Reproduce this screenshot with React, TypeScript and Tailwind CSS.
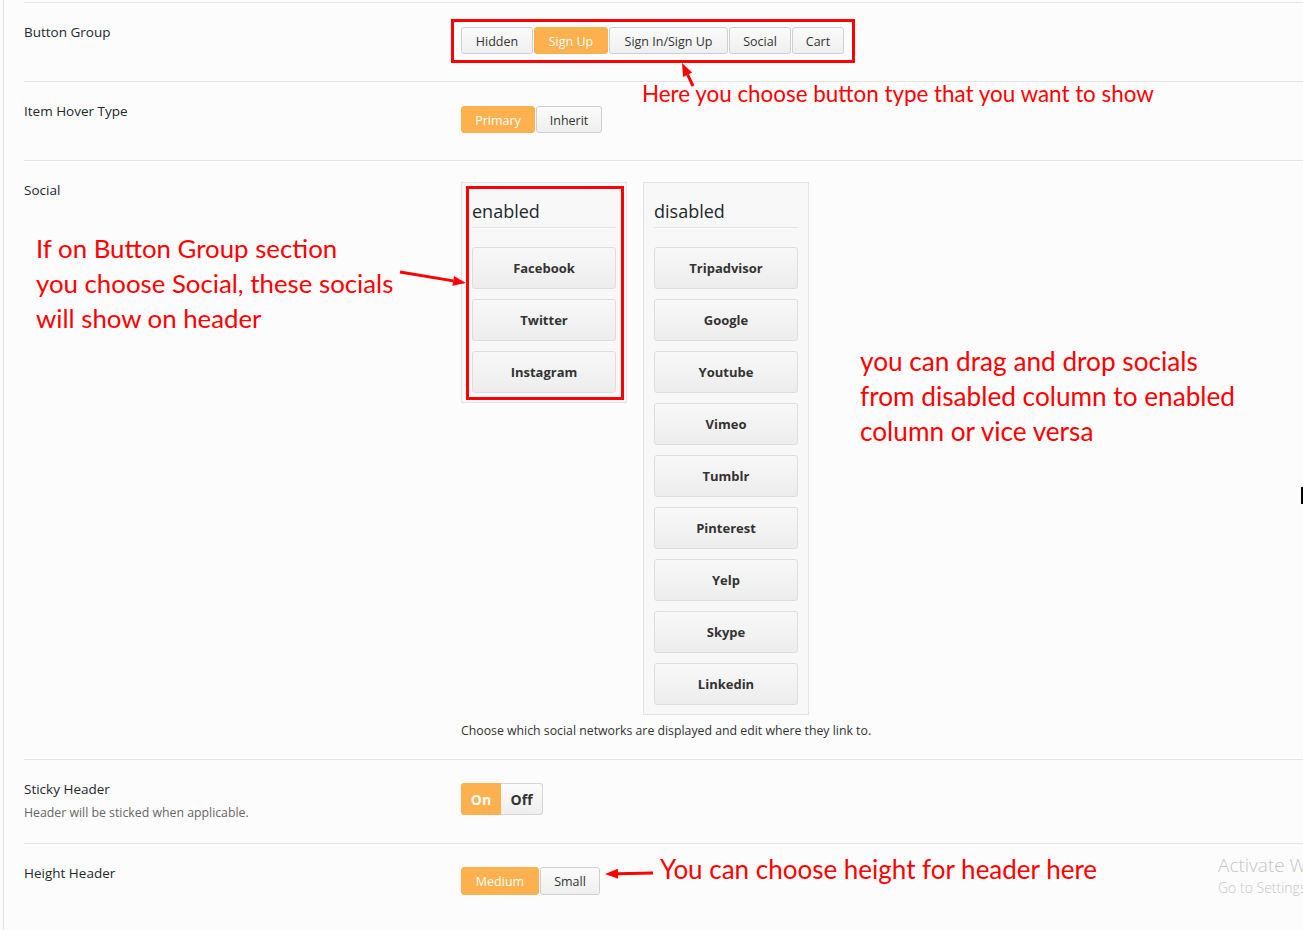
import React from "react";

const UI = { fontFamily: '"Open Sans", "Noto Sans", sans-serif' };
const ANN = { fontFamily: 'Lato, "Noto Sans", sans-serif' };

function Btn({ label, w, active, h = "h-[27px]" }: { label: string; w: string; active?: boolean; h?: string }) {
  return (
    <div
      className={
        `${w} ${h} flex items-center justify-center pt-[3px] rounded-[3px] border text-[12.5px] leading-none ` +
        (active
          ? "bg-[#fcb04e] border-[#fcb04e] text-white"
          : "bg-linear-to-b from-[#fbfbfb] to-[#efefef] border-[#cfcfcf] text-[#333]")
      }
    >
      {label}
    </div>
  );
}

function SocialItem({ name }: { name: string }) {
  return (
    <div className="h-[42px] flex items-center justify-center pt-[2px] rounded-[3px] border border-[#dedede] bg-linear-to-b from-[#f8f8f8] to-[#ededed] text-[13px] font-bold text-[#333]">
      {name}
    </div>
  );
}

function SocialCol({ title, items }: { title: string; items: string[] }) {
  return (
    <div className="w-[166px] border border-[#e3e3e3] bg-[#f8f8f8] px-[10px] pt-[15px] pb-[9px]">
      <div className="text-[18px] leading-[26px] text-[#23282d] pb-[3px] border-b border-[#e5e5e5]">{title}</div>
      <div className="mt-[19px] flex flex-col gap-[10px]">
        {items.map((n) => (
          <SocialItem key={n} name={n} />
        ))}
      </div>
    </div>
  );
}

function Arrow({ x1, y1, x2, y2 }: { x1: number; y1: number; x2: number; y2: number }) {
  const dx = x2 - x1;
  const dy = y2 - y1;
  const len = Math.sqrt(dx * dx + dy * dy);
  const ux = dx / len;
  const uy = dy / len;
  const hl = 13;
  const hw = 5;
  const bx = x2 - ux * hl;
  const by = y2 - uy * hl;
  const px = -uy;
  const py = ux;
  const pts = `${x2},${y2} ${bx + px * hw},${by + py * hw} ${bx - px * hw},${by - py * hw}`;
  return (
    <g>
      <line x1={x1} y1={y1} x2={bx} y2={by} stroke="#ff0000" strokeWidth={3} />
      <polygon points={pts} fill="#ff0000" />
    </g>
  );
}

export default function App() {
  return (
    <div className="relative w-full h-[930px] bg-[#fcfcfc] overflow-hidden flex" style={UI}>
      <div className="w-[3px] shrink-0 bg-[#fcfcfc]" />
      <div className="flex-1 border-l border-[#e3e3e3] pl-[20px] pt-[2px]">
        {/* Button Group */}
        <div className="flex border-t border-[#e5e5e5]">
          <div className="w-[437px] shrink-0 pt-[19px] text-[13.5px] leading-[20px] text-[#23282d]">Button Group</div>
          <div className="pt-[24px] pb-[27px] flex gap-[1px]">
            <Btn label="Hidden" w="w-[72px]" />
            <Btn label="Sign Up" w="w-[74px]" active />
            <Btn label="Sign In/Sign Up" w="w-[119px]" />
            <Btn label="Social" w="w-[62px]" />
            <Btn label="Cart" w="w-[52px]" />
          </div>
        </div>
        {/* Item Hover Type */}
        <div className="flex border-t border-[#e5e5e5]">
          <div className="w-[437px] shrink-0 pt-[19px] text-[13.5px] leading-[20px] text-[#23282d]">Item Hover Type</div>
          <div className="pt-[24px] pb-[27px] flex gap-[1px]">
            <Btn label="Primary" w="w-[74px]" active />
            <Btn label="Inherit" w="w-[66px]" />
          </div>
        </div>
        {/* Social */}
        <div className="flex border-t border-[#e5e5e5]">
          <div className="w-[437px] shrink-0 pt-[19px] text-[13.5px] leading-[20px] text-[#23282d]">Social</div>
          <div className="pt-[21px] pb-[19px]">
            <div className="flex items-start gap-[16px]">
              <SocialCol title="enabled" items={["Facebook", "Twitter", "Instagram"]} />
              <SocialCol
                title="disabled"
                items={["Tripadvisor", "Google", "Youtube", "Vimeo", "Tumblr", "Pinterest", "Yelp", "Skype", "Linkedin"]}
              />
            </div>
            <div className="mt-[7px] text-[12.3px] leading-[18px] text-[#333]">
              Choose which social networks are displayed and edit where they link to.
            </div>
          </div>
        </div>
        {/* Sticky Header */}
        <div className="flex border-t border-[#e5e5e5]">
          <div className="w-[437px] shrink-0 pt-[19px]">
            <div className="text-[13.5px] leading-[20px] text-[#23282d]">Sticky Header</div>
            <div className="mt-[5px] text-[12.3px] leading-[18px] text-[#666]">Header will be sticked when applicable.</div>
          </div>
          <div className="pt-[23px] pb-[28px] flex">
            <div className="w-[40px] h-[32px] flex items-center justify-center rounded-l-[3px] bg-[#fcb04e] text-white text-[14px] font-bold">
              On
            </div>
            <div className="w-[42px] h-[32px] flex items-center justify-center rounded-r-[3px] border border-l-0 border-[#d5d5d5] bg-linear-to-b from-[#fbfbfb] to-[#efefef] text-[#333] text-[14px] font-bold">
              Off
            </div>
          </div>
        </div>
        {/* Height Header */}
        <div className="flex border-t border-[#e5e5e5]">
          <div className="w-[437px] shrink-0 pt-[19px] text-[13.5px] leading-[20px] text-[#23282d]">Height Header</div>
          <div className="pt-[23px] flex gap-[1px]">
            <Btn label="Medium" w="w-[78px]" h="h-[28px]" active />
            <Btn label="Small" w="w-[60px]" h="h-[28px]" />
          </div>
        </div>
      </div>

      {/* Annotation overlays */}
      <div className="absolute left-[451px] top-[19px] w-[404px] h-[44px] border-[3px] border-[#ff0000]" />
      <div className="absolute left-[466px] top-[186px] w-[158px] h-[214px] border-[3px] border-[#ff0000]" />
      <svg className="absolute left-0 top-0 pointer-events-none" width={1303} height={930}>
        <Arrow x1={693} y1={86} x2={682} y2={63} />
        <Arrow x1={400} y1={272} x2={466} y2={283} />
        <Arrow x1={653} y1={873} x2={605} y2={874} />
      </svg>
      <div className="absolute left-[642px] top-[80px] text-[22.4px] leading-[28px] text-[#ff0000] whitespace-nowrap" style={ANN}>
        Here you choose button type that you want to show
      </div>
      <div className="absolute left-[36px] top-[231px] text-[25.8px] leading-[35px] text-[#ff0000] whitespace-nowrap" style={ANN}>
        <div>If on Button Group section</div>
        <div>you choose Social, these socials</div>
        <div>will show on header</div>
      </div>
      <div className="absolute left-[860px] top-[344px] text-[26.2px] leading-[35px] text-[#ff0000] whitespace-nowrap" style={ANN}>
        <div>you can drag and drop socials</div>
        <div>from disabled column to enabled</div>
        <div>column or vice versa</div>
      </div>
      <div className="absolute left-[660px] top-[853px] text-[26px] leading-[32px] text-[#ff0000] whitespace-nowrap" style={ANN}>
        You can choose height for header here
      </div>
      <div className="absolute left-[1218px] top-[852px] whitespace-nowrap text-[#c6c6c6]" style={UI}>
        <div className="text-[19px] leading-[26px] font-light">Activate Windows</div>
        <div className="text-[14px] leading-[20px] font-light">Go to Settings to activate Windows.</div>
      </div>
      <div className="absolute left-[1301px] top-[487px] w-[2px] h-[17px] bg-black" />
    </div>
  );
}
